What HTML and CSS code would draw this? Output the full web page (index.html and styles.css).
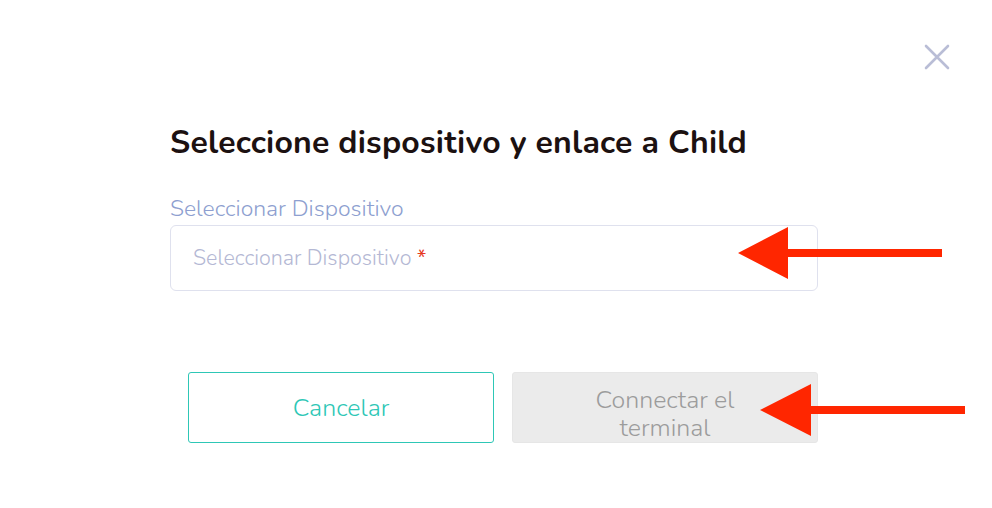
FILE: index.html
```html
<!DOCTYPE html>
<html lang="es">
<head>
	<meta charset="UTF-8">
	<title>Enlazar dispositivo</title>
	<link rel="stylesheet" href="styles.css">
</head>
<body>
	<div class="modal">
		<div class="top">
			<button class="close" aria-label="Cerrar">
				<svg width="26" height="26" viewBox="0 0 26 26">
					<path d="M2 2L24 24M24 2L2 24" stroke="#b9bdd6" stroke-width="2.6" stroke-linecap="round"/>
				</svg>
			</button>
		</div>
		<div class="body">
			<h2 class="ttl">Seleccione dispositivo y enlace a Child</h2>
			<label class="lbl">Seleccionar Dispositivo</label>
			<div class="field">
				<span class="ph">Seleccionar Dispositivo <em>*</em></span>
				<svg class="arw arw1" width="204" height="52" viewBox="0 0 204 52">
					<path d="M0 26L50 0V22H204V30H50V52Z" fill="#ff2600"/>
				</svg>
			</div>
			<div class="btns">
				<button class="btn cancel">Cancelar</button>
				<button class="btn connect" disabled>
					<span class="lines">Connectar el<br>terminal</span>
					<svg class="arw arw2" width="205" height="52" viewBox="0 0 205 52">
						<path d="M0 26L51 0V22H205V30H51V52Z" fill="#ff2600"/>
					</svg>
				</button>
			</div>
		</div>
	</div>
</body>
</html>
```

FILE: styles.css
```css
html,body{
	width: 100%;
	height: 100%;
	padding: 0px;
	margin: 0px;
	background: #fff;
}
body{font-family: "Nunito", "Lato", "Noto Sans", sans-serif;}
.modal{
	width: 992px;
	height: 508px;
	overflow: hidden;
}
.top{
	display: flex;
	justify-content: flex-end;
	padding: 44px 42px 0 0;
}
.close{
	border: 0;
	background: none;
	padding: 0;
	width: 26px;
	height: 26px;
	cursor: pointer;
}
.close svg{display: block;}
.body{
	width: 648px;
	padding: 54px 0 0 170px;
}
.ttl{
	margin: 0;
	font-size: 32px;
	line-height: 38px;
	font-weight: 700;
	color: #1c1111;
	letter-spacing: 0.2px;
}
.lbl{
	display: block;
	margin-top: 33px;
	font-size: 23px;
	line-height: 28px;
	font-weight: 300;
	color: #8e9fd0;
}
.field{
	position: relative;
	margin-top: 2px;
	height: 64px;
	border: 1px solid #dfe1ee;
	border-radius: 6px;
	display: flex;
	align-items: center;
	padding-left: 22px;
}
.ph{
	font-size: 21.5px;
	color: #b4b8d4;
	font-weight: 300;
}
.ph em{font-style: normal; color: #e5391f; font-weight: 400;}
.arw{position: absolute;}
.arw1{left: 567px; top: 1px;}
.btns{
	display: flex;
	justify-content: flex-end;
	gap: 18px;
	margin-top: 81px;
}
.btn{
	position: relative;
	width: 306px;
	height: 71px;
	border-radius: 3px;
	font-family: inherit;
	font-size: 25px;
	line-height: 28px;
	font-weight: 300;
	padding: 0;
}
.cancel{
	background: #fff;
	border: 1px solid #2ec7b6;
	color: #2ec7b6;
}
.connect{
	background: #ebebeb;
	border: 1px solid #e6e6e6;
	color: #9c9c9c;
	display: flex;
	justify-content: center;
	align-items: flex-start;
	padding-top: 13px;
}
.lines{display: block;}
.arw2{left: 247px; top: 11px;}
```
